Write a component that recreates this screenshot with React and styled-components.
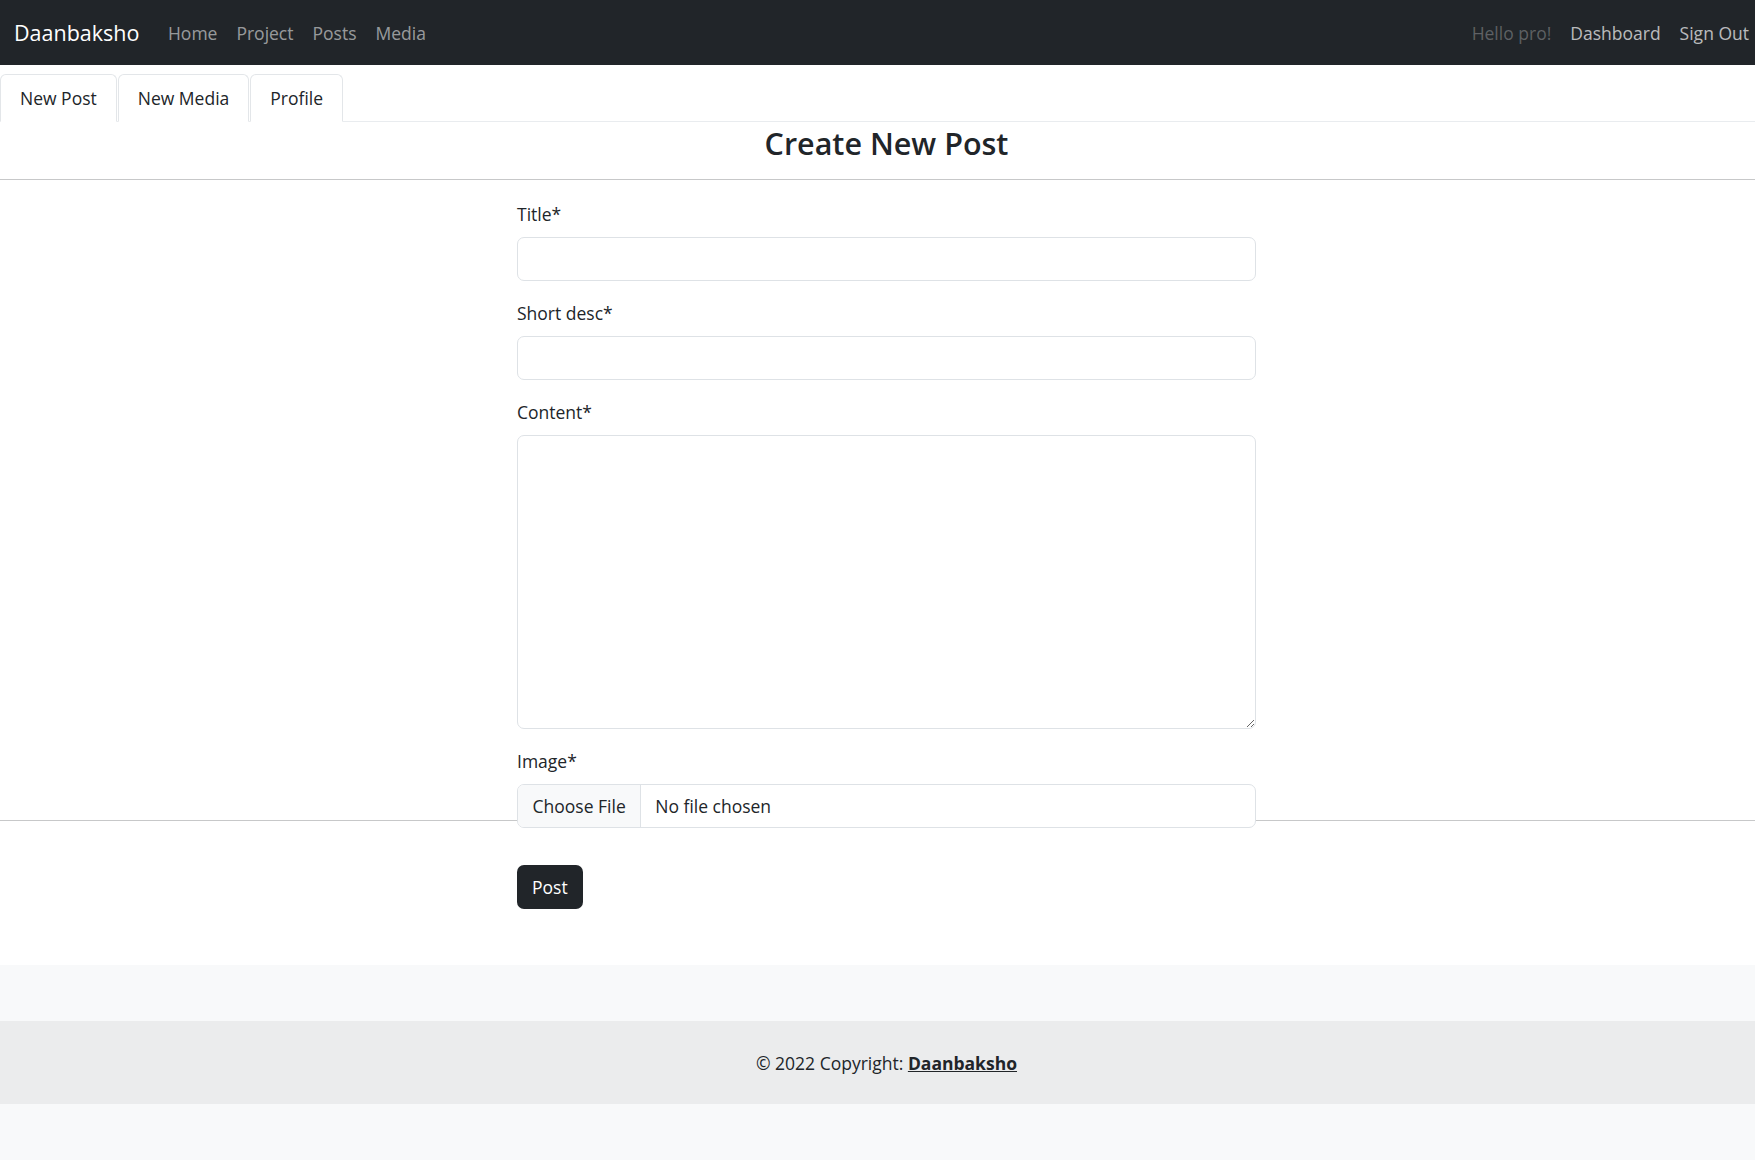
import React from "react";
import styled, { createGlobalStyle } from "styled-components";

const GlobalStyle = createGlobalStyle`
  * {
    box-sizing: border-box;
  }
  body {
    margin: 0;
    font-family: "Open Sans", "Liberation Sans", sans-serif;
    font-size: 17.5px;
    color: #212529;
    background: #fff;
  }
`;

const navLinks = ["Home", "Project", "Posts", "Media"];
const tabs = ["New Post", "New Media", "Profile"];

const App = () => {
  return (
    <>
      <GlobalStyle />
      <Navbar>
        <Brand>Daanbaksho</Brand>
        <NavList>
          {navLinks.map((link) => (
            <NavLink key={link}>{link}</NavLink>
          ))}
        </NavList>
        <NavRight>
          <NavLink muted>Hello pro!</NavLink>
          <NavLink bright>Dashboard</NavLink>
          <NavLink bright last>
            Sign Out
          </NavLink>
        </NavRight>
      </Navbar>

      <TabBar>
        {tabs.map((tab) => (
          <Tab key={tab}>{tab}</Tab>
        ))}
      </TabBar>

      <PageTitle>Create New Post</PageTitle>
      <Rule />

      <FormSection>
        <Form>
          <FieldGroup>
            <Label>Title*</Label>
            <Input type="text" />
          </FieldGroup>
          <FieldGroup>
            <Label>Short desc*</Label>
            <Input type="text" />
          </FieldGroup>
          <FieldGroup>
            <Label>Content*</Label>
            <TextArea />
          </FieldGroup>
          <FieldGroup>
            <Label>Image*</Label>
            <FileInput type="file" />
          </FieldGroup>
          <SubmitButton type="button">Post</SubmitButton>
        </Form>
      </FormSection>
      <Rule />

      <Footer>
        <Copyright>
          © 2022 Copyright: <FooterLink href="#">Daanbaksho</FooterLink>
        </Copyright>
      </Footer>
    </>
  );
};

export default App;

const Navbar = styled.nav`
  display: flex;
  align-items: center;
  height: 65px;
  padding: 0 0 0 14px;
  background-color: #212529;
`;

const Brand = styled.a`
  font-size: 21.5px;
  color: #fff;
  margin-right: 19px;
  margin-top: -1px;
`;

const NavList = styled.div`
  display: flex;
  align-items: center;
`;

const NavRight = styled.div`
  display: flex;
  align-items: center;
  margin-left: auto;
`;

const NavLink = styled.a`
  padding: 0 ${(props) => (props.last ? "6px" : "9.5px")} 0 9.5px;
  font-size: 17.5px;
  cursor: pointer;
  color: ${(props) =>
    props.muted
      ? "rgba(255, 255, 255, 0.28)"
      : props.bright
      ? "rgba(255, 255, 255, 0.7)"
      : "rgba(255, 255, 255, 0.55)"};
`;

const TabBar = styled.div`
  display: flex;
  margin-top: 9px;
  border-bottom: 1px solid #e9ecef;
`;

const Tab = styled.div`
  display: flex;
  align-items: center;
  height: 48px;
  padding: 0 19px;
  margin-right: 1px;
  margin-bottom: -1px;
  border: 1px solid #e3e6e9;
  border-bottom-color: #fff;
  border-radius: 6px 6px 0 0;
  background: #fff;
  color: #212529;
  font-size: 17.5px;
  cursor: pointer;
`;

const PageTitle = styled.h3`
  margin: 0;
  height: 57px;
  padding: 3px 0 0 18px;
  text-align: center;
  font-size: 30.5px;
  line-height: 36px;
  font-weight: 600;
  color: #212529;
`;

const Rule = styled.hr`
  margin: 0;
  border: 0;
  border-top: 1px solid #c7c8c9;
`;

const FormSection = styled.section`
  height: 640px;
  display: flex;
  justify-content: center;
  padding-left: 18px;
`;

const Form = styled.form`
  position: relative;
  z-index: 1;
  width: 739px;
  padding-top: 21px;
  height: max-content;
`;

const FieldGroup = styled.div`
  display: flex;
  flex-direction: column;
  margin-bottom: 19px;
`;

const Label = styled.label`
  line-height: 27px;
  margin-bottom: 9px;
  color: #212529;
`;

const fieldBase = `
  width: 100%;
  border: 1px solid #dee2e6;
  border-radius: 7px;
  background: #fff;
  font-family: inherit;
  font-size: 17.5px;
  color: #212529;
`;

const Input = styled.input`
  ${fieldBase}
  height: 44px;
  padding: 0 14px;
`;

const TextArea = styled.textarea`
  ${fieldBase}
  height: 294px;
  padding: 8px 14px;
  resize: vertical;
`;

const FileInput = styled.input`
  ${fieldBase}
  height: 44px;
  padding: 0;
  overflow: hidden;

  &::file-selector-button {
    height: 100%;
    margin: 0 14px 0 0;
    padding: 0 14.5px;
    border: 0;
    border-right: 1px solid #dee2e6;
    background: #f8f9fa;
    color: #212529;
    font-family: inherit;
    font-size: 17.5px;
  }
`;

const SubmitButton = styled.button`
  margin-top: 18px;
  height: 44px;
  padding: 0 15px;
  border: 0;
  border-radius: 7px;
  background: #212529;
  color: #fff;
  font-family: inherit;
  font-size: 17.5px;
  cursor: pointer;
`;

const Footer = styled.footer`
  margin-top: 144px;
  padding: 56px 0 56px;
  background: #f8f9fa;
`;

const Copyright = styled.div`
  display: flex;
  align-items: center;
  justify-content: center;
  height: 83px;
  padding-left: 18px;
  background: rgba(0, 0, 0, 0.05);
  color: #212529;
  font-size: 17.5px;
  white-space: pre;
`;

const FooterLink = styled.a`
  color: #212529;
  font-weight: 700;
  text-decoration: underline;
`;
